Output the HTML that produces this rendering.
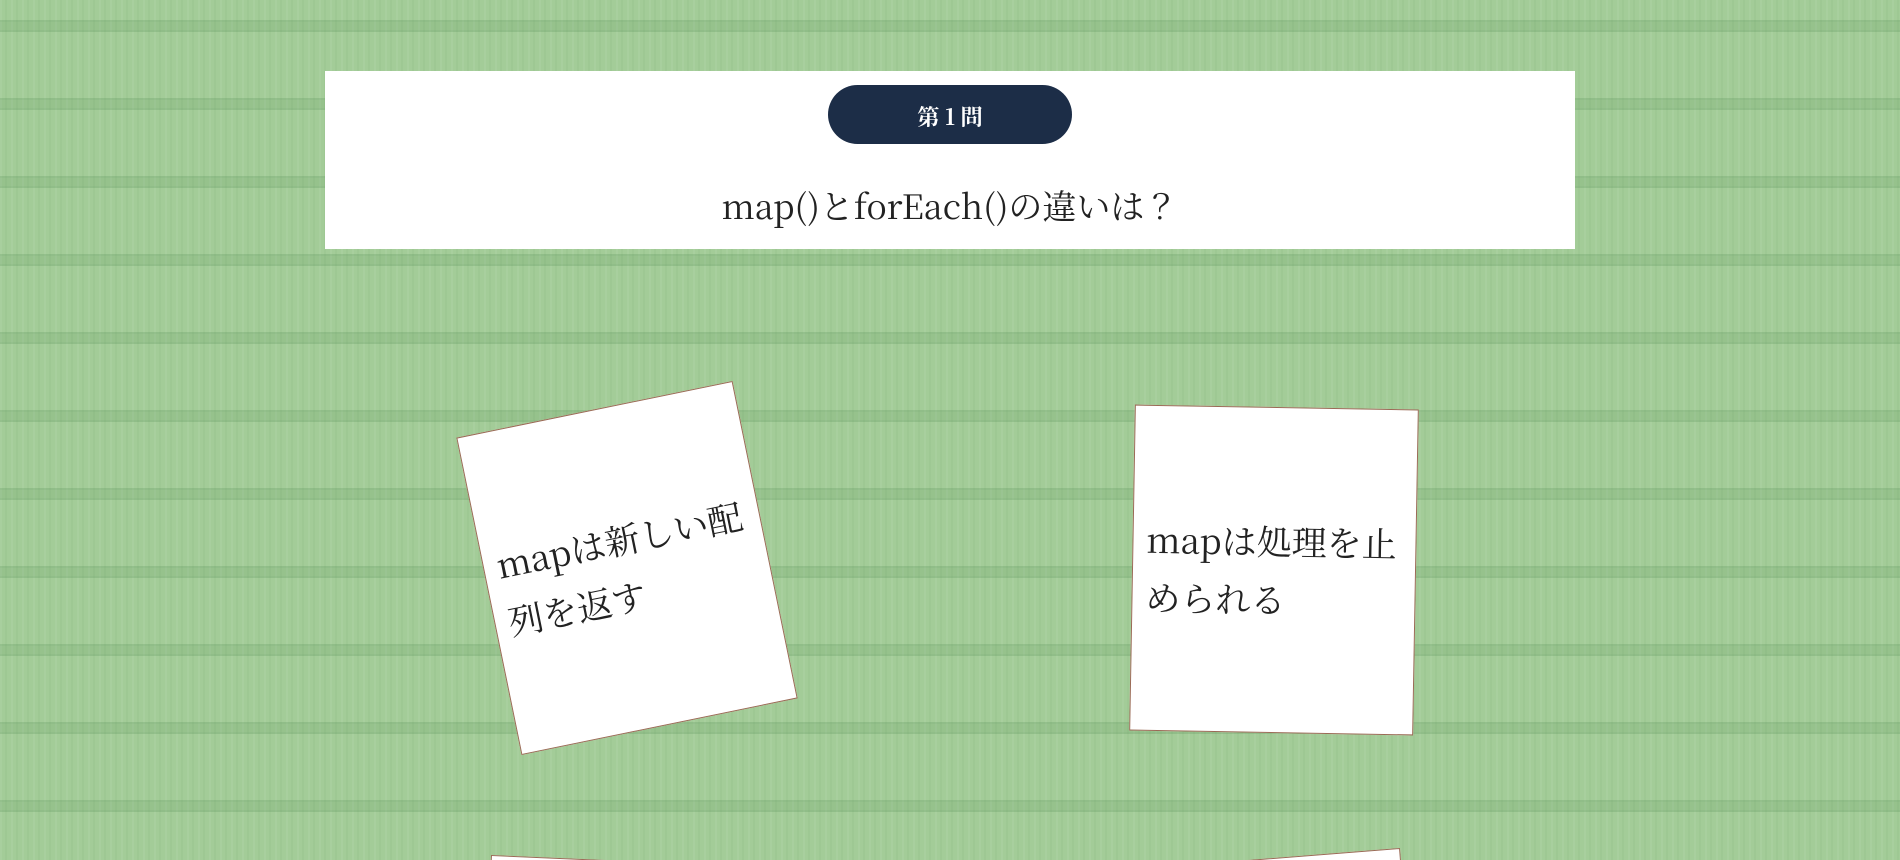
<!DOCTYPE html>
<html><head><meta charset="utf-8"><style>
html,body{margin:0;padding:0;width:1900px;height:860px;overflow:hidden}
body{position:relative;background-color:#a3cc98;
background-image:
repeating-linear-gradient(180deg,transparent 0,transparent 20px,rgba(70,130,70,.2) 20px,rgba(70,130,70,.2) 22px,rgba(70,130,70,.14) 22px,rgba(70,130,70,.14) 30px,rgba(70,130,70,.2) 30px,rgba(70,130,70,.2) 32px,transparent 32px,transparent 78px),
repeating-linear-gradient(90deg,rgba(255,255,255,.06) 0,rgba(255,255,255,.06) 2px,transparent 2px,transparent 5px,rgba(60,120,60,.05) 5px,rgba(60,120,60,.05) 7px,transparent 7px,transparent 11px);
font-family:"Noto Serif CJK JP","Liberation Serif",serif;color:#222}
.wrap{position:absolute;left:0;top:0;width:1900px;height:860px;overflow:hidden}
.head{position:absolute;left:325px;top:71px;width:1250px;height:178px;background:#fff}
.pill{position:absolute;left:503px;top:14px;width:244px;height:59px;border-radius:30px;background:#1c2d47;color:#fff;font-weight:bold;font-size:22px;line-height:63px;text-align:center}
.q{position:absolute;left:0;right:0;top:109px;text-align:center;font-size:34px;line-height:50px}
.card{position:absolute;width:282px;height:324px;background:#fff;border:1px solid #9a6a55;box-sizing:border-box;display:flex;align-items:center;padding:0 11px 0 13px;font-size:35px;line-height:58px}
</style></head><body><div class="wrap">
<div class="head"><div class="pill">第 1 問</div><div class="q">map()とforEach()の違いは？</div></div>
<div class="card" style="left:486px;top:406px;transform:rotate(-11.6deg)">mapは新しい配列を返す</div>
<div class="card" style="left:1132px;top:407px;width:284px;height:326px;transform:rotate(1deg)">mapは処理を止められる</div>
<div class="card" style="left:491px;top:855px;transform:rotate(2.5deg);transform-origin:0 0"></div>
<div class="card" style="left:1118px;top:848px;transform:rotate(-4.5deg);transform-origin:100% 0"></div>
</div></body></html>
